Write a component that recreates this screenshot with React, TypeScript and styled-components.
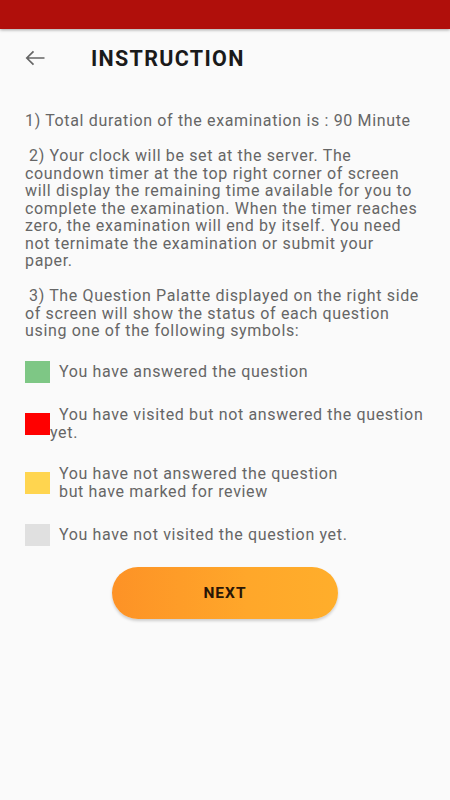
import React from "react";
import styled, { createGlobalStyle } from "styled-components";

const Global = createGlobalStyle`
  html, body { margin: 0; padding: 0; background: #fafafa; }
  body { font-family: Roboto, "Noto Sans", "Liberation Sans", sans-serif; }
  * { box-sizing: border-box; }
`;

const Screen = styled.div`
  width: 450px;
  min-height: 800px;
  background: #fafafa;
  display: flex;
  flex-direction: column;
`;

const StatusBar = styled.div`
  height: 29px;
  background: #b00f0b;
  box-shadow: 0 1px 3px rgba(0, 0, 0, 0.35);
`;

const Header = styled.div`
  display: flex;
  align-items: center;
  height: 58px;
  padding-left: 25px;
  margin-bottom: 25px;
`;

const BackButton = styled.button`
  width: 20px;
  height: 20px;
  padding: 0;
  border: none;
  background: none;
  display: flex;
  align-items: center;
  justify-content: center;
  margin-right: 46px;
  color: #666;
`;

const Title = styled.h1`
  margin: 0;
  font-size: 21.5px;
  font-weight: 700;
  color: #1a1a1a;
  letter-spacing: 1.3px;
`;

const Body = styled.div`
  padding: 0 25px;
  color: #666;
  font-size: 16px;
  line-height: 17.5px;
  letter-spacing: 0.65px;
`;

const Para = styled.p<{ $indent?: boolean; $last?: boolean }>`
  margin: 0 0 ${(p) => (p.$last ? "0" : "17.5px")} 0;
  text-indent: ${(p) => (p.$indent ? "4px" : "0")};
`;

const Legend = styled.div`
  display: flex;
  flex-direction: column;
  gap: 23px;
  margin-top: 21px;
`;

const LegendRow = styled.div`
  display: flex;
  align-items: center;
`;

const Swatch = styled.span<{ $color: string }>`
  flex: 0 0 25px;
  height: 22px;
  background: ${(p) => p.$color};
`;

const LegendText = styled.span<{ $hang?: boolean }>`
  display: block;
  line-height: 18px;
  padding-left: ${(p) => (p.$hang ? "0" : "9px")};
  text-indent: ${(p) => (p.$hang ? "9px" : "0")};
`;

const ButtonWrap = styled.div`
  display: flex;
  justify-content: center;
  margin-top: 21px;
`;

const NextButton = styled.button`
  width: 226px;
  height: 52px;
  border: none;
  border-radius: 26px;
  background: linear-gradient(90deg, #fd9226 0%, #ffa72a 60%, #ffae2b 100%);
  box-shadow: 0 2px 3px rgba(0, 0, 0, 0.18);
  font-family: Roboto, "Liberation Sans", sans-serif;
  font-size: 15.5px;
  font-weight: 700;
  color: #2a1606;
  letter-spacing: 1px;
`;

export default function App() {
  return (
    <Screen>
      <Global />
      <StatusBar />
      <Header>
        <BackButton aria-label="back">
          <svg width="20" height="20" viewBox="0 0 20 20" fill="none">
            <path
              d="M19.5 10H1.8M8.5 3.3L1.8 10l6.7 6.7"
              stroke="#666"
              strokeWidth="1.7"
            />
          </svg>
        </BackButton>
        <Title>INSTRUCTION</Title>
      </Header>
      <Body>
        <Para>1) Total duration of the examination is : 90 Minute</Para>
        <Para $indent>
          2) Your clock will be set at the server. The coundown timer at the
          top right corner of screen will display the remaining time available
          for you to complete the examination. When the timer reaches zero, the
          examination will end by itself. You need not ternimate the
          examination or submit your paper.
        </Para>
        <Para $indent $last>
          3) The Question Palatte displayed on the right side of screen will
          show the status of each question using one of the following symbols:
        </Para>
        <Legend>
          <LegendRow>
            <Swatch $color="#7ec785" />
            <LegendText>You have answered the question</LegendText>
          </LegendRow>
          <LegendRow>
            <Swatch $color="#ff0000" />
            <LegendText $hang>
              You have visited but not answered the question yet.
            </LegendText>
          </LegendRow>
          <LegendRow>
            <Swatch $color="#ffd54f" />
            <LegendText>
              You have not answered the question
              <br />
              but have marked for review
            </LegendText>
          </LegendRow>
          <LegendRow>
            <Swatch $color="#e0e0e0" />
            <LegendText>You have not visited the question yet.</LegendText>
          </LegendRow>
        </Legend>
        <ButtonWrap>
          <NextButton>NEXT</NextButton>
        </ButtonWrap>
      </Body>
    </Screen>
  );
}
